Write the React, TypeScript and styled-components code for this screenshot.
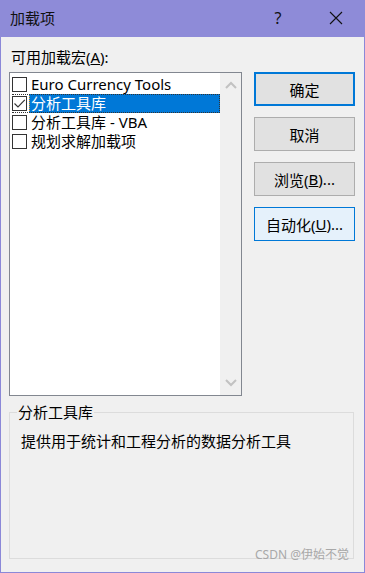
import styled, { createGlobalStyle } from "styled-components";

const GlobalStyle = createGlobalStyle`
  html, body {
    margin: 0;
    padding: 0;
    background: #f0f0f0;
  }
  * {
    box-sizing: border-box;
  }
`

const font = `"Noto Sans", "Noto Sans CJK SC", sans-serif`

const addins = [
    {name: "Euro Currency Tools", checked: false},
    {name: "分析工具库", checked: true},
    {name: "分析工具库 - VBA", checked: false},
    {name: "规划求解加载项", checked: false},
]

const buttons = [
    {label: "确定", key: "", variant: "default"},
    {label: "取消", key: "", variant: "normal"},
    {label: "浏览(", key: "B", rest: ")...", variant: "normal"},
    {label: "自动化(", key: "U", rest: ")...", variant: "hover"},
]

export default function App() {
    return (
        <>
            <GlobalStyle/>
            <Window>
                <TitleBar>
                    <Title>加载项</Title>
                    <TitleActions>
                        <HelpButton>?</HelpButton>
                        <CloseButton>
                            <svg width="14" height="14" viewBox="0 0 14 14">
                                <path d="M1 1 L13 13 M13 1 L1 13" stroke="#111" strokeWidth="1.1"/>
                            </svg>
                        </CloseButton>
                    </TitleActions>
                </TitleBar>
                <Body>
                    <ListLabel>可用加载宏(<u>A</u>):</ListLabel>
                    <MainRow>
                        <ListBox>
                            <Items>
                                {addins.map((item, i) => (
                                    <Item key={item.name} $focused={i === 1}>
                                        <CheckBox>
                                            {item.checked && (
                                                <svg width="13" height="13" viewBox="0 0 13 13">
                                                    <path d="M1.5 6.5 L5 10 L11.8 2.8" fill="none" stroke="#333" strokeWidth="1.1"/>
                                                </svg>
                                            )}
                                        </CheckBox>
                                        <ItemText $selected={i === 1}>{item.name}</ItemText>
                                    </Item>
                                ))}
                            </Items>
                            <ScrollBar>
                                <svg width="12" height="8" viewBox="0 0 12 8">
                                    <path d="M1 7 L6 2 L11 7" fill="none" stroke="#c2c2c2" strokeWidth="2"/>
                                </svg>
                                <svg width="12" height="8" viewBox="0 0 12 8">
                                    <path d="M1 1 L6 6 L11 1" fill="none" stroke="#c2c2c2" strokeWidth="2"/>
                                </svg>
                            </ScrollBar>
                        </ListBox>
                        <Buttons>
                            {buttons.map((b) => (
                                <Button key={b.label} $variant={b.variant}>
                                    {b.label}{b.key && <u>{b.key}</u>}{b.rest}
                                </Button>
                            ))}
                        </Buttons>
                    </MainRow>
                    <GroupBox>
                        <GroupLegend>分析工具库</GroupLegend>
                        <GroupText>提供用于统计和工程分析的数据分析工具</GroupText>
                        <Watermark>CSDN @伊始不觉</Watermark>
                    </GroupBox>
                </Body>
            </Window>
        </>
    );
}

const Window = styled.div`
  width: 365px;
  height: 573px;
  display: flex;
  flex-direction: column;
  border: 1px solid #8b88d8;
  border-top: none;
  background: #f0f0f0;
  font-family: ${font};
  color: #000;
`

const TitleBar = styled.div`
  height: 37px;
  flex-shrink: 0;
  display: flex;
  align-items: center;
  justify-content: space-between;
  margin: 0 -1px;
  padding: 0 0 2px 10px;
  background: #8e8bd8;
`

const Title = styled.div`
  font-size: 15px;
  color: #111;
`

const TitleActions = styled.div`
  display: flex;
  align-items: center;
`

const HelpButton = styled.div`
  width: 46px;
  text-align: center;
  font-size: 16px;
  color: #111;
`

const CloseButton = styled.div`
  width: 46px;
  height: 30px;
  margin-left: 12px;
  margin-right: 6px;
  display: flex;
  align-items: center;
  justify-content: center;
`

const Body = styled.div`
  flex: 1;
  display: flex;
  flex-direction: column;
  padding: 10px 9px 0 8px;
`

const ListLabel = styled.div`
  font-size: 15px;
  line-height: 20px;
  padding-left: 2px;
  margin-bottom: 5px;
`

const MainRow = styled.div`
  display: flex;
  align-items: flex-start;
  gap: 12px;
`

const ListBox = styled.div`
  width: 234px;
  height: 324px;
  display: flex;
  border: 1px solid #828790;
  background: #fff;
`

const Items = styled.div`
  flex: 1;
  padding: 2px 0 0 2px;
`

const Item = styled.div<{ $focused: boolean }>`
  height: 19px;
  display: flex;
  align-items: center;
  outline: ${p => p.$focused ? "1px dotted #333" : "none"};
  outline-offset: -1px;
`

const CheckBox = styled.div`
  width: 15px;
  height: 15px;
  margin: 0 2px 0 0;
  flex-shrink: 0;
  display: flex;
  align-items: center;
  justify-content: center;
  border: 1px solid #333;
  background: #fff;
`

const ItemText = styled.div<{ $selected: boolean }>`
  flex: 1;
  height: 19px;
  padding-left: 2px;
  font-size: 15px;
  line-height: 19px;
  white-space: nowrap;
  color: ${p => p.$selected ? "#fff" : "#000"};
  background: ${p => p.$selected ? "#0078d7" : "transparent"};
  outline: ${p => p.$selected ? "1px dotted #f7a12a" : "none"};
  outline-offset: -1px;
`

const ScrollBar = styled.div`
  width: 21px;
  display: flex;
  flex-direction: column;
  justify-content: space-between;
  align-items: center;
  padding: 8px 0 8px;
  background: #f0f0f0;
`

const Buttons = styled.div`
  display: flex;
  flex-direction: column;
  gap: 11px;
`

const Button = styled.div<{ $variant: string }>`
  width: 101px;
  height: 34px;
  display: flex;
  align-items: center;
  justify-content: center;
  font-size: 15px;
  background: ${p => p.$variant === "hover" ? "#e5f1fb" : "#e1e1e1"};
  border: ${p => p.$variant === "default" ? "2px solid #0078d7"
          : p.$variant === "hover" ? "1px solid #0078d7" : "1px solid #adadad"};
`

const GroupBox = styled.div`
  position: relative;
  margin-top: 16px;
  margin-right: 1px;
  height: 147px;
  border: 1px solid #dcdcdc;
  padding: 18px 11px 0;
`

const GroupLegend = styled.div`
  position: absolute;
  top: -11px;
  left: 7px;
  padding: 0 1px;
  background: #f0f0f0;
  font-size: 15px;
  line-height: 20px;
`

const GroupText = styled.div`
  font-size: 15px;
  line-height: 20px;
`

const Watermark = styled.div`
  position: absolute;
  right: 4px;
  bottom: -5px;
  font-size: 12px;
  color: #a8a8a8;
  font-family: ${font};
`
